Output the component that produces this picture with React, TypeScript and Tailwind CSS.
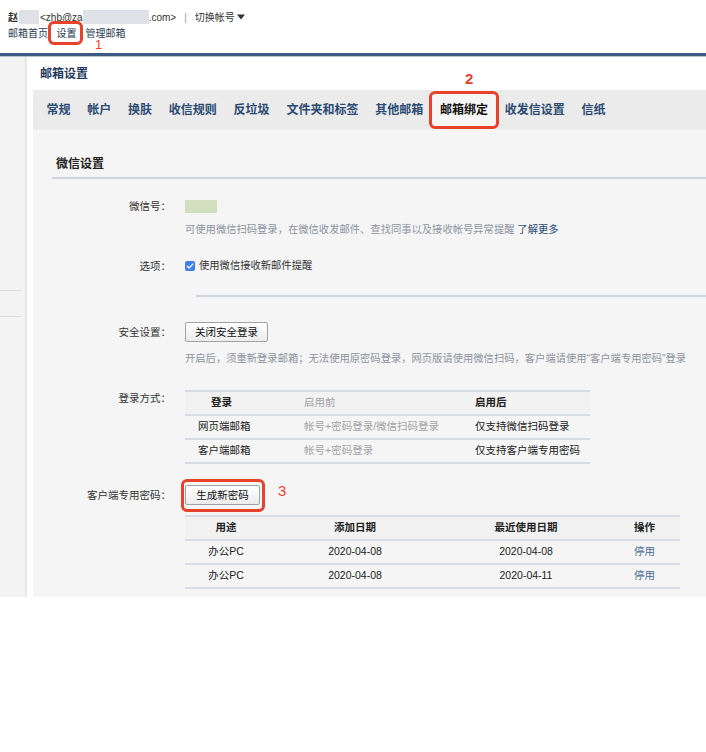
import React from "react";

const font = { fontFamily: '"Liberation Sans", "Noto Sans CJK SC", sans-serif' };

const tabs = ["常规", "帐户", "换肤", "收信规则", "反垃圾", "文件夹和标签", "其他邮箱", "邮箱绑定", "收发信设置", "信纸"];

function RedBox({ className }: { className: string }) {
  return <span className={"pointer-events-none absolute rounded-[6px] border-[3px] border-[#e8412c] " + className} />;
}

function Row({ label, children, top = false }: { label: string; children: React.ReactNode; top?: boolean }) {
  return (
    <div className={"flex " + (top ? "items-start" : "items-center")}>
      <div className={"w-[119px] shrink-0 text-right text-[10.5px] text-[#333] " + (top ? "pt-[1px] leading-[14px]" : "leading-[20px]")}>
        {label}
      </div>
      <div className="ml-[14px] flex flex-1 items-center">{children}</div>
    </div>
  );
}

function Btn({ children, w }: { children: React.ReactNode; w: string }) {
  return (
    <button
      className={
        "block h-[20px] rounded-[2px] border border-[#a3a3a3] bg-gradient-to-b from-white to-[#ececec] text-[10.5px] leading-[18px] text-[#111] " + w
      }
    >
      {children}
    </button>
  );
}

export default function App() {
  return (
    <div className="relative h-[752px] w-[706px] overflow-hidden bg-white" style={font}>
      {/* top header */}
      <header className="relative h-[53px] pl-[8px] pt-[9px] text-[10px]">
        <div className="flex h-[16px] items-center text-[#333]">
          <span className="font-bold">赵</span>
          <span className="ml-[1px] inline-block h-[14px] w-[20px] bg-[#dfe1e6]" />
          <span className="ml-[1px]">&lt;zhb@za</span>
          <span className="inline-block h-[14px] w-[66px] bg-[#dfe1e6]" />
          <span>.com&gt;</span>
          <span className="mx-[8px] text-[#999]">|</span>
          <span>切换帐号</span>
          <svg className="ml-[2px]" width="8" height="6" viewBox="0 0 8 6">
            <path d="M0 0.5h8L4 5.5z" fill="#333" />
          </svg>
        </div>
        <div className="flex h-[16px] items-center text-[#2b3b55]">
          <span>邮箱首页</span>
          <span className="text-[#999]">|</span>
          <span className="ml-[6px]">设置</span>
          <span className="ml-[9px]">管理邮箱</span>
        </div>
        <RedBox className="left-[48px] top-[21px] h-[24px] w-[35px]" />
        <span className="absolute left-[95px] top-[38px] text-[13px] leading-[13px] text-[#e8412c]">1</span>
      </header>
      <div className="h-[3px] bg-[#3e5a82]" />
      <div className="h-px bg-[#b7c3d3]" />

      <div className="flex h-[540px]">
        {/* left rail */}
        <aside className="w-[27px] shrink-0 border-r-2 border-[#e6e6e6] bg-[#f3f3f3]">
          <div className="mt-[233px] mr-[4px] h-px bg-[#dedede]" />
          <div className="mt-[25px] mr-[4px] h-px bg-[#dedede]" />
        </aside>
        <div className="w-[6px] shrink-0" />

        <main className="flex min-w-0 flex-1 flex-col">
          <div className="relative flex h-[33px] shrink-0 items-center pl-[7px] text-[12px] font-bold text-[#1f3a60]">
            邮箱设置
            <span className="absolute left-[432px] top-[14px] text-[15px] leading-[16px] text-[#e8412c]">2</span>
          </div>
          <nav className="flex h-[40px] shrink-0 items-stretch bg-[#ebebeb] pl-[5px] text-[12px] font-bold">
            {tabs.map((t) => (
              <div
                key={t}
                className={
                  "relative flex items-center px-[8.4px] " +
                  (t === "邮箱绑定" ? "bg-[#f5f5f5] text-[#111]" : "text-[#2a4a73]")
                }
              >
                {t}
                {t === "邮箱绑定" && <RedBox className="-left-[3px] -right-[3px] top-[1px] bottom-[1px]" />}
              </div>
            ))}
          </nav>

          <section className="min-h-0 flex-1 overflow-hidden bg-[#f5f5f5] pl-[19px]">
            <div className="border-b-2 border-[#cfd5de] pb-[4px] pl-[4px] pt-[25px] text-[12px] font-bold leading-[18px] text-[#222]">
              微信设置
            </div>

            <div className="mt-[17px]">
              <Row label="微信号：">
                <div className="h-[13px] w-[32px] bg-[#d1dfbf]" />
              </Row>
            </div>
            <div className="ml-[133px] mt-[6px] text-[10.3px] leading-[16px] text-[#8c939e]">
              可使用微信扫码登录，在微信收发邮件、查找同事以及接收帐号异常提醒 <span className="text-[#2a4a73]">了解更多</span>
            </div>

            <div className="mt-[18px]">
              <Row label="选项：">
                <div className="flex items-center text-[10.3px] text-[#333]">
                  <svg width="10" height="10" viewBox="0 0 10 10">
                    <rect width="10" height="10" rx="2" fill="#3f7fe6" />
                    <path d="M2.3 5.2l1.8 1.9 3.6-4" fill="none" stroke="white" strokeWidth="1.4" strokeLinecap="round" strokeLinejoin="round" />
                  </svg>
                  <span className="ml-[4px]">使用微信接收新邮件提醒</span>
                </div>
              </Row>
            </div>

            <div className="ml-[144px] mt-[19px] h-[2px] bg-[#cfd5de]" />

            <div className="mt-[25px]">
              <Row label="安全设置：">
                <Btn w="w-[83px]">关闭安全登录</Btn>
              </Row>
            </div>
            <div className="ml-[133px] mt-[9px] text-[10.3px] leading-[16px] text-[#8c939e]">
              开启后，须重新登录邮箱；无法使用原密码登录，网页版请使用微信扫码，客户端请使用“客户端专用密码”登录
            </div>

            <div className="mt-[23px]">
              <Row label="登录方式：" top>
                <table className="w-[405px] border-collapse text-left text-[10.5px]">
                  <thead>
                    <tr className="h-[24px] border-y-2 border-[#d5dde8] bg-[#f2f2f2]">
                      <th className="w-[119px] pl-[26px] font-bold text-[#222]">登录</th>
                      <th className="w-[171px] font-normal text-[#a3a3a3]">启用前</th>
                      <th className="font-bold text-[#222]">启用后</th>
                    </tr>
                  </thead>
                  <tbody>
                    <tr className="h-[24px] border-b-2 border-[#d5dde8]">
                      <td className="pl-[13px] text-[#222]">网页端邮箱</td>
                      <td className="text-[#a3a3a3]">帐号+密码登录/微信扫码登录</td>
                      <td className="text-[#222]">仅支持微信扫码登录</td>
                    </tr>
                    <tr className="h-[24px] border-b-2 border-[#d5dde8]">
                      <td className="pl-[13px] text-[#222]">客户端邮箱</td>
                      <td className="text-[#a3a3a3]">帐号+密码登录</td>
                      <td className="text-[#222]">仅支持客户端专用密码</td>
                    </tr>
                  </tbody>
                </table>
              </Row>
            </div>

            <div className="mt-[21px]">
              <Row label="客户端专用密码：">
                <div className="relative">
                  <Btn w="w-[75px]">生成新密码</Btn>
                  <RedBox className="-left-[4px] -right-[5px] -top-[6px] -bottom-[7px]" />
                  <span className="absolute left-[93px] top-[-2px] text-[15px] leading-[16px] text-[#e8412c]">3</span>
                </div>
              </Row>
            </div>

            <div className="ml-[133px] mt-[10px] pb-[11px]">
              <table className="w-[495px] border-collapse text-center text-[10.5px] text-[#222]">
                <thead>
                  <tr className="h-[24px] border-y-2 border-[#d5dde8] bg-[#f2f2f2] font-bold">
                    <th className="w-[82px]">用途</th>
                    <th className="w-[176px]">添加日期</th>
                    <th className="w-[166px]">最近使用日期</th>
                    <th>操作</th>
                  </tr>
                </thead>
                <tbody>
                  {[
                    ["办公PC", "2020-04-08", "2020-04-08"],
                    ["办公PC", "2020-04-08", "2020-04-11"],
                  ].map((r, i) => (
                    <tr key={i} className="h-[24px] border-b-2 border-[#d5dde8]">
                      <td>{r[0]}</td>
                      <td>{r[1]}</td>
                      <td>{r[2]}</td>
                      <td className="text-[#4a6a9a]">停用</td>
                    </tr>
                  ))}
                </tbody>
              </table>
            </div>
          </section>
        </main>
      </div>
    </div>
  );
}
